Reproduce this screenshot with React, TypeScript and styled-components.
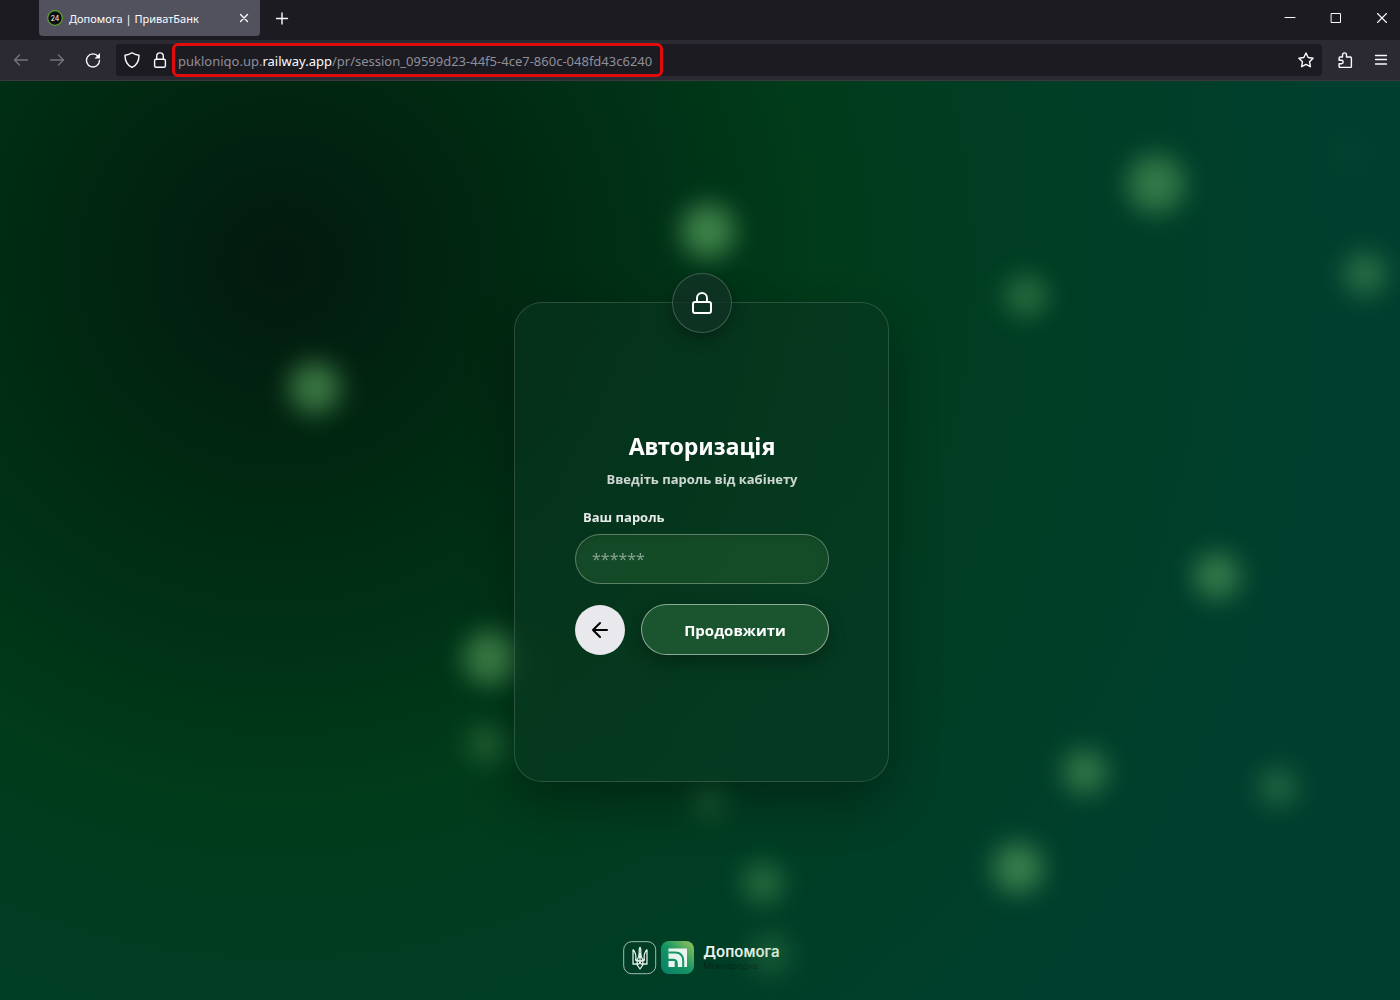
import React from "react";
import styled, { createGlobalStyle } from "styled-components";

const GlobalStyle = createGlobalStyle`
  * { box-sizing: border-box; }
  html, body, #root { height: 100%; }
  body { margin: 0; background: #003d2d; font-family: "Open Sans", "Noto Sans", sans-serif; }
  button { font: inherit; padding: 0; border: 0; background: none; color: inherit; cursor: pointer; }
  input { font: inherit; }
`;

const Window = styled.div`
  display: flex;
  flex-direction: column;
  min-height: 100vh;
`;

const TabBar = styled.header`
  display: flex;
  align-items: center;
  height: 40px;
  padding: 0 0 4px 39px;
  background: #1c1b22;
  color: #fbfbfe;
`;

const Tab = styled.div`
  display: flex;
  align-items: center;
  width: 221px;
  height: 36px;
  padding: 0 8px;
  gap: 6px;
  border-radius: 0 0 4px 4px;
  background: #52525e;
  font-family: "Noto Sans", sans-serif;
  font-size: 11px;
`;

const TabTitle = styled.span`
  flex: 1;
  white-space: nowrap;
`;

const IconButton = styled.button<{ $width: number; $dim?: boolean }>`
  display: flex;
  flex: none;
  align-items: center;
  justify-content: center;
  width: ${(p) => p.$width}px;
  height: 32px;
  color: ${(p) => (p.$dim ? "#75747c" : "#fbfbfe")};
`;

const WindowControls = styled.div`
  display: flex;
  margin-left: auto;
`;

const NavBar = styled.nav`
  display: flex;
  align-items: center;
  height: 41px;
  padding: 0 2px 0 3px;
  border-bottom: 1px solid #38383d;
  background: #2b2a33;
  color: #fbfbfe;
`;

const AddressBar = styled.div`
  display: flex;
  flex: 1;
  align-items: center;
  min-width: 0;
  height: 32px;
  margin: 0 5px;
  border-radius: 4px;
  background: #1c1b22;
`;

const Url = styled.div`
  display: flex;
  align-items: center;
  flex: none;
  height: 34px;
  padding: 1px 8px 0 3px;
  margin-right: auto;
  border: 3px solid #e30b0b;
  border-radius: 6px;
  font-family: "Noto Sans", sans-serif;
  font-size: 13px;
  color: #8f8f9a;
  white-space: nowrap;
`;

const Domain = styled.span`
  color: #fbfbfe;
`;

const Page = styled.main`
  position: relative;
  display: flex;
  flex: 1;
  flex-direction: column;
  align-items: center;
  padding: 221px 0 25px 3px;
  overflow: hidden;
  background: radial-gradient(circle at 20% 20%, #031a0f 0%, #002711 15%, #003217 29%, #003b1a 40%, #003d22 52%, #003f2e 80%);
`;

const Glow = styled.i<{ $x: number; $y: number; $size: number; $alpha: number }>`
  position: absolute;
  left: ${(p) => p.$x}%;
  top: ${(p) => p.$y}%;
  width: ${(p) => p.$size}px;
  height: ${(p) => p.$size}px;
  border-radius: 50%;
  background: #65b468;
  opacity: ${(p) => p.$alpha};
  filter: blur(13px);
  transform: translate(-50%, -50%);
`;

const Card = styled.section`
  position: relative;
  display: flex;
  flex-direction: column;
  align-items: center;
  width: 375px;
  max-width: 100%;
  height: 480px;
  padding: 127px 59px 0 60px;
  border: 1px solid rgba(255, 255, 255, 0.15);
  border-radius: 28px;
  background: rgba(10, 54, 34, 0.5);
  box-shadow: 0 20px 50px rgba(0, 0, 0, 0.32);
  backdrop-filter: blur(20px);
`;

const LockBadge = styled.div`
  position: absolute;
  top: -30px;
  left: 157px;
  display: flex;
  align-items: center;
  justify-content: center;
  width: 60px;
  height: 60px;
  border: 1px solid rgba(255, 255, 255, 0.2);
  border-radius: 50%;
  background: rgba(16, 50, 36, 0.8);
  box-shadow: 0 6px 16px rgba(0, 0, 0, 0.3);
  color: #fff;
`;

const Title = styled.h1`
  margin: 0;
  font-family: "Noto Sans", sans-serif;
  font-size: 23px;
  font-weight: 700;
  line-height: 32px;
  color: #fff;
`;

const Subtitle = styled.p`
  margin: 7px 0 18px;
  font-size: 13px;
  font-weight: 700;
  line-height: 20px;
  color: rgba(255, 255, 255, 0.8);
`;

const Form = styled.form`
  display: flex;
  flex-direction: column;
  width: 100%;
`;

const Label = styled.label`
  padding-left: 8px;
  margin-bottom: 7px;
  font-size: 13px;
  font-weight: 700;
  line-height: 20px;
  color: rgba(255, 255, 255, 0.9);
`;

const PasswordInput = styled.input`
  width: 100%;
  height: 50px;
  padding: 0 16px;
  border: 1px solid rgba(255, 255, 255, 0.3);
  border-radius: 25px;
  outline: 0;
  background: rgba(42, 104, 54, 0.42);
  box-shadow: inset 0 2px 6px rgba(0, 0, 0, 0.12);
  font-size: 16px;
  color: #fff;
  &::placeholder { color: rgba(255, 255, 255, 0.5); opacity: 1; }
`;

const Actions = styled.div`
  display: flex;
  align-items: center;
  gap: 16px;
  margin-top: 20px;
`;

const BackButton = styled.button`
  display: flex;
  flex: none;
  align-items: center;
  justify-content: center;
  width: 50px;
  height: 50px;
  border-radius: 50%;
  background: #e9e8ed;
  color: #000;
`;

const ContinueButton = styled.button`
  flex: 1;
  height: 51px;
  border: 1px solid rgba(255, 255, 255, 0.5);
  border-radius: 26px;
  background: #1a552f;
  box-shadow: 0 6px 18px rgba(0, 0, 0, 0.3);
  font-size: 15px;
  font-weight: 700;
  color: #fff;
`;

const Footer = styled.footer`
  display: flex;
  align-items: center;
  gap: 4px;
  margin-top: auto;
`;

const Brand = styled.div`
  display: flex;
  flex-direction: column;
  padding: 1px 0 1px 4px;
  font-family: Inter, sans-serif;
`;

const BrandName = styled.strong`
  font-size: 15px;
  font-weight: 600;
  line-height: 16px;
  color: #eaf3ee;
`;

const BrandNote = styled.span`
  font-size: 9px;
  line-height: 12px;
  color: #022818;
`;

const glows = [
  { x: 50.6, y: 16.3, size: 54, alpha: 0.62 },
  { x: 22.5, y: 33.4, size: 52, alpha: 0.58 },
  { x: 82.6, y: 11.2, size: 58, alpha: 0.5 },
  { x: 73.3, y: 23.4, size: 42, alpha: 0.4 },
  { x: 97.5, y: 21, size: 42, alpha: 0.42 },
  { x: 96.4, y: 7.7, size: 36, alpha: 0.03 },
  { x: 86.9, y: 53.9, size: 46, alpha: 0.52 },
  { x: 35.1, y: 62.8, size: 54, alpha: 0.58 },
  { x: 34.8, y: 72.1, size: 40, alpha: 0.3 },
  { x: 77.5, y: 75.2, size: 44, alpha: 0.5 },
  { x: 91.3, y: 76.8, size: 36, alpha: 0.36 },
  { x: 72.7, y: 85.6, size: 50, alpha: 0.56 },
  { x: 54.5, y: 87.3, size: 40, alpha: 0.4 },
  { x: 50.7, y: 78.4, size: 34, alpha: 0.25 },
  { x: 55, y: 95, size: 42, alpha: 0.24 },
];

const Icon = ({ size = 16, stroke = 1.4, children }: { size?: number; stroke?: number; children: React.ReactNode }) => (
  <svg width={size} height={size} viewBox={`0 0 ${size} ${size}`} fill="none" stroke="currentColor" strokeWidth={stroke} strokeLinecap="round" strokeLinejoin="round" aria-hidden="true">
    {children}
  </svg>
);

export default function App() {
  return (
    <>
      <GlobalStyle />
      <Window>
        <TabBar>
          <Tab>
            <svg width="16" height="16" viewBox="0 0 16 16" aria-hidden="true">
              <circle cx="8" cy="8" r="7.3" fill="#0c0f12" stroke="#5fa52f" strokeWidth="1.2" />
              <text x="8" y="10.6" textAnchor="middle" fontFamily="Inter, sans-serif" fontSize="7" fill="#fff">24</text>
            </svg>
            <TabTitle>Допомога | ПриватБанк</TabTitle>
            <IconButton $width={16} aria-label="Close tab">
              <Icon><path d="M4.5 4.5l7 7M11.5 4.5l-7 7" /></Icon>
            </IconButton>
          </Tab>
          <IconButton $width={43} aria-label="New tab">
            <Icon><path d="M8 3v11M2.5 8.5h11" /></Icon>
          </IconButton>
          <WindowControls>
            <IconButton $width={36} aria-label="Minimize">
              <Icon stroke={1}><path d="M3 7.5h10" /></Icon>
            </IconButton>
            <IconButton $width={56} aria-label="Maximize">
              <Icon stroke={1}><path d="M3.5 3.5h9v9h-9z" /></Icon>
            </IconButton>
            <IconButton $width={36} aria-label="Close">
              <Icon stroke={1.1}><path d="M3.5 3.5l9 9M12.5 3.5l-9 9" /></Icon>
            </IconButton>
          </WindowControls>
        </TabBar>
        <NavBar>
          <IconButton $width={36} $dim aria-label="Back">
            <Icon><path d="M14.5 8h-13M6.5 3L1.5 8l5 5" /></Icon>
          </IconButton>
          <IconButton $width={36} $dim aria-label="Forward">
            <Icon><path d="M1.5 8h13M9.5 3l5 5-5 5" /></Icon>
          </IconButton>
          <IconButton $width={36} aria-label="Reload">
            <Icon><path d="M13.2 4.5A6.5 6.5 0 1 0 14.5 8.5" /><path d="M15 1v5.5h-5.5z" fill="currentColor" stroke="none" /></Icon>
          </IconButton>
          <AddressBar>
            <IconButton $width={32} aria-label="Tracking protection">
              <Icon><path d="M8 .8c2 1.4 4.2 2.2 7 2.4C15 9 13 13.2 8 15.4 3 13.2 1 9 1 3.2 3.800 3 6 2.200 8 .8z" /></Icon>
            </IconButton>
            <IconButton $width={24} aria-label="Site information">
              <Icon><rect x="2.600" y="7.200" width="10.800" height="8" rx="1.500" /><path d="M4.700 7V4.200a3.300 3.300 0 0 1 6.600 0V7" /></Icon>
            </IconButton>
            <Url>pukloniqo.up.<Domain>railway.app</Domain>/pr/session_09599d23-44f5-4ce7-860c-048fd43c6240</Url>
            <IconButton $width={32} aria-label="Bookmark">
              <Icon><path d="M8 1l2.200 4.500 4.900.7-3.600 3.500.9 5L8 12.400l-4.400 2.300.9-5L.9 6.200l4.900-.7z" /></Icon>
            </IconButton>
          </AddressBar>
          <IconButton $width={36} aria-label="Extensions">
            <Icon><path d="M5.500 5V2.900a2 2 0 0 1 4 0V5h4c.5 0 .9.400.9.900v8.600c0 .5-.4.900-.9.900H3c-.5 0-.9-.4-.9-.9v-2.700h2.300a1.700 1.700 0 0 0 0-3.500H2.100V5.900c0-.5.4-.9.9-.9z" /></Icon>
          </IconButton>
          <IconButton $width={35} aria-label="Menu">
            <Icon stroke={1.3}><path d="M2.500 3.500h11M2.500 7.500h11M2.500 12h11" /></Icon>
          </IconButton>
        </NavBar>
        <Page>
          {glows.map((g, i) => (
            <Glow key={i} $x={g.x} $y={g.y} $size={g.size} $alpha={g.alpha} />
          ))}
          <Card>
            <LockBadge>
              <Icon size={24} stroke={2}><rect x="3" y="11" width="18" height="11" rx="2" /><path d="M7 11V7a5 5 0 0 1 10 0v4" /></Icon>
            </LockBadge>
            <Title>Авторизація</Title>
            <Subtitle>Введіть пароль від кабінету</Subtitle>
            <Form onSubmit={(e) => e.preventDefault()}>
              <Label htmlFor="password">Ваш пароль</Label>
              <PasswordInput id="password" type="password" placeholder="******" autoComplete="off" />
              <Actions>
                <BackButton type="button" aria-label="Назад">
                  <Icon size={24} stroke={2}><path d="M19 12H5M12 5l-7 7 7 7" /></Icon>
                </BackButton>
                <ContinueButton type="submit">Продовжити</ContinueButton>
              </Actions>
            </Form>
          </Card>
          <Footer>
            <svg width="34" height="34" viewBox="0 0 34 34" fill="none" stroke="#e4efe9" strokeLinejoin="round" aria-hidden="true">
              <rect x=".7" y=".7" width="32" height="32" rx="8" strokeWidth="1" opacity=".7" />
              <path d="M10 8.500V23h4.200M24 8.500V23h-4.200M10 8.500c2.600 2.800 3.400 6.500 2.600 11M24 8.500c-2.600 2.800-3.400 6.500-2.600 11M17 6c-1.300 2-1 4-.8 6 .2 3-.6 5-2.400 7M17 6c1.300 2 1 4 .8 6-.2 3 .6 5 2.400 7M17 12v10M14.200 19.500v4.500L17 28l2.800-4v-4.500M12.600 19.500h3L17 22l1.400-2.500h3M14.200 24L17 22l2.800 2" strokeWidth="1.300" />
            </svg>
            <svg width="34" height="34" viewBox="0 0 34 34" aria-hidden="true">
              <defs>
                <linearGradient id="tile" x1="0" y1="1" x2="1" y2="0">
                  <stop offset="0" stopColor="#087f68" />
                  <stop offset=".5" stopColor="#159663" />
                  <stop offset="1" stopColor="#9cc45c" />
                </linearGradient>
              </defs>
              <rect width="33" height="33" rx="8" fill="url(#tile)" />
              <path d="M7.500 7.500h18.500v18.500h-9.200v-3.500c0-3.200-1.400-4.700-4.800-4.700H7.500z" fill="#e9f5ee" />
              <path d="M7.500 11.600h6.500c5.500 0 8.200 3 8.200 8.500V26" fill="none" stroke="#159663" strokeWidth="2" />
              <path d="M7.500 20h6.200v6H7.500z" fill="#e9f5ee" />
            </svg>
            <Brand>
              <BrandName>Допомога</BrandName>
              <BrandNote>Міжнародна</BrandNote>
            </Brand>
          </Footer>
        </Page>
      </Window>
    </>
  );
}
